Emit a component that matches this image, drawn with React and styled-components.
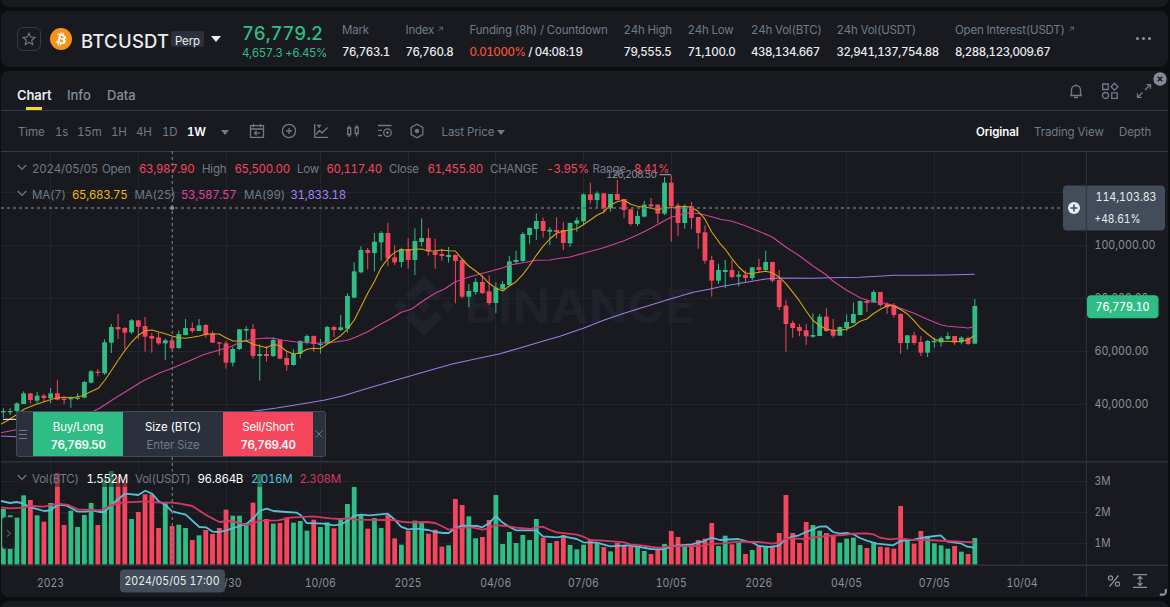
import React from "react";
import styled, { createGlobalStyle, css } from "styled-components";

const c = {
  bg: "#0b0e11", panel: "#181a1f", line: "#333b47", grid: "#22252c", text: "#eaecef",
  muted: "#707a8a", axis: "#8b919b", up: "#2ebd85", down: "#f6465d", yellow: "#fcd535",
  gold: "#d9a30d", pink: "#d6409f", purple: "#9f7aea", cyan: "#56bfd8", rose: "#d63864",
  box: "#2b313c", tag: "#434c5a",
};

const Global = createGlobalStyle`
  * { box-sizing: border-box; }
  body {
    margin: 0; background: ${c.bg}; color: ${c.text}; overflow: hidden;
    font-family: Inter, "Liberation Sans", sans-serif; font-size: 11.5px; font-variant-numeric: tabular-nums;
  }
`;
const Page = styled.div`
  width: 1170px; height: 607px; padding: 0 2px 0 1px; overflow: hidden;
  display: flex; flex-direction: column; gap: 4px;
`;
const Sliver = styled.div`
  flex: none; background: ${c.panel}; height: ${(p) => (p.$top ? 7 : 10)}px;
  border-radius: ${(p) => (p.$top ? "0 0 8px 8px" : "8px 8px 0 0")};
`;
const Panel = styled.section`
  flex: none; background: ${c.panel}; border-radius: 8px; position: relative; overflow: hidden;
`;
const Header = styled(Panel)`
  height: 56px; display: flex; align-items: flex-start; padding: 0 16px;
`;
const StarBox = styled.div`
  width: 24px; height: 24px; margin-top: 16px; border: 1px solid ${c.line}; border-radius: 6px;
  display: flex; align-items: center; justify-content: center;
`;
const Coin = styled.div`margin: 17px 0 0 9px; width: 22px; height: 22px;`;
const Pair = styled.h1`
  margin: 19px 0 0 9px; width: 90px; font-size: 18.5px; line-height: 23px; font-weight: 500; white-space: nowrap;
  letter-spacing: 0.25px;
`;
const Perp = styled.span`
  margin-top: 20px; width: 33px; height: 16px; border-radius: 2px; background: ${c.box};
  font-size: 11.5px; line-height: 20px; text-align: center; letter-spacing: -0.1px;
`;
const Caret = styled.i`
  flex: none; width: 0; height: 0; border: ${(p) => p.$s}px solid transparent; border-bottom: 0;
  border-top: ${(p) => p.$s + 1}px solid ${(p) => p.$c};
`;
const PairCaret = styled(Caret)`margin: 25px 0 0 7px;`;
const Price = styled.div`
  margin-left: 21px; width: 100px; color: ${c.up}; white-space: nowrap;
  strong { display: block; margin-top: 11px; font-size: 18.5px; line-height: 23px; font-weight: 500; letter-spacing: -0.12px; }
  span { display: block; line-height: 17px; letter-spacing: -0.42px; }
`;
const Stat = styled.dl`
  margin: 0; flex: none; width: ${(p) => p.$w}px; white-space: nowrap;
  dt { margin-top: 11px; line-height: 16px; color: ${c.muted}; display: flex; gap: 4px; letter-spacing: -0.2px; }
  dt svg { flex: none; }
  dd { margin: 5px 0 0; line-height: 18px; letter-spacing: ${(p) => (p.$ls === undefined ? -0.4 : p.$ls)}px; font-weight: 500; }
  b { font-weight: 500; color: #f0542f; }
`;
const More = styled.div`
  margin: 26px 0 0 63px; display: flex; gap: 3px; width: 16px;
  i { width: 3px; height: 3px; border-radius: 50%; background: ${c.axis}; }
`;
const ChartPanel = styled(Panel)`height: 526px; display: flex; flex-direction: column;`;
const Tabs = styled.nav`
  flex: none; height: 40px; border-bottom: 1px solid ${c.line}; display: flex; padding: 0 15px 0 16px;
`;
const Tab = styled.span`
  width: ${(p) => p.$w}px; font-size: 13px; line-height: 48px; font-weight: 500; position: relative;
  color: ${(p) => (p.$on ? c.text : "#848e9c")};
  ${(p) => p.$on && css`font-weight: 600; letter-spacing: -0.1px; &::after { content: ""; position: absolute; left: 9px; top: 36px; width: 16px; height: 3px; background: ${c.yellow}; }`}
`;
const TabIcons = styled.div`
  margin-left: auto; display: flex; gap: 16px; padding: 11px 0 0; color: ${c.muted};
  svg { display: block; }
`;
const CloseDot = styled.div`
  position: absolute; right: 1px; top: 1px; width: 14px; height: 14px;
`;
const Toolbar = styled.div`
  flex: none; height: 40px; display: flex; align-items: center; padding: 2px 16px 0 17px; color: ${c.muted};
  svg { flex: none; display: block; }
`;
const Tool = styled.span`
  flex: none; width: ${(p) => p.$w}px; line-height: 17px; white-space: nowrap; letter-spacing: -0.1px;
  font-weight: ${(p) => (p.$on ? 600 : 400)}; color: ${(p) => (p.$on ? "#fff" : c.muted)};
`;
const Icons = styled.div`display: flex; gap: 16px; margin: -2px 16.5px 0 20px;`;
const Modes = styled.div`margin-left: auto; display: flex;`;
const ChartBox = styled.div`
  position: relative; height: 446px; border-top: 1px solid ${c.line};
  > svg { display: block; margin-top: -1px; }
`;
const Legend = styled.div`
  position: absolute; left: 16px; top: ${(p) => p.$top}px; display: flex; line-height: 16px;
  background: ${(p) => (p.$veil ? "rgba(24, 26, 31, 0.5)" : "none")};
  svg { flex: none; width: 10px; height: 12px; margin-right: 5px; }
`;
const Item = styled.span`
  flex: none; width: ${(p) => p.$w}px; white-space: nowrap;
  letter-spacing: ${(p) => (p.$c ? -0.34 : -0.2)}px; color: ${(p) => p.$c || c.muted};
`;
const Order = styled.div`
  position: absolute; left: 15px; top: 259px; width: 310px; height: 46px; display: flex;
  background: ${c.box}; border: 1px solid ${c.tag}; border-radius: 3px;
`;
const Grip = styled.div`
  width: 16px; padding-right: 4px; display: flex; flex-direction: column; gap: 3px; justify-content: center; align-items: center;
  i { width: 8px; height: 1px; background: ${c.muted}; }
`;
const Side = styled.div`
  width: ${(p) => p.$w}px; background: ${(p) => p.$bg || "none"}; color: #fff; text-align: center;
  padding-top: 6px; line-height: 18px; white-space: nowrap; letter-spacing: -0.15px;
  div + div { font-weight: ${(p) => (p.$bg ? 600 : 400)}; color: ${(p) => (p.$bg ? "#fff" : c.muted)}; letter-spacing: ${(p) => (p.$bg ? -0.35 : -0.15)}px; }
`;
const CloseX = styled.div`width: 12px; display: flex; align-items: center; justify-content: center;`;

/* high, body top, body bottom, low (third-pixels below the plot top), volume top; the first letter marks direction */
const candles = `G775,783,786,803,176 G774,783,786,795,196 G757,760,783,787,203 G724,730,762,762,136 R730,730,750,760,150
G726,737,752,760,196 R731,737,744,756,215 G714,730,745,759,159 R690,730,749,751,69 R739,746,750,762,225
G739,744,748,773,182 G730,743,746,750,231 G693,696,743,745,195 G660,664,698,700,159 R657,665,669,679,225
G568,577,670,675,88 G522,531,578,609,63 R492,531,538,567,80 R531,534,548,597,97 G507,511,547,552,207
R511,511,530,568,186 R501,528,560,605,133 R549,558,566,608,133 R548,562,580,585,234 G566,571,580,630,160
R562,571,595,600,228 G541,552,594,597,224 G507,534,555,556,234 R517,534,543,549,270 G507,526,543,543,256
R522,525,555,563,240 R544,550,578,579,252 R576,577,581,616,234 R573,580,638,656,179 G590,597,638,649,197
G537,538,597,600,197 G529,537,542,575,219 R522,537,618,627,158 G583,612,618,692,72 R588,612,618,635,207
G561,570,618,621,221 R570,570,626,626,219 R606,624,645,662,202 G598,611,645,647,218 G571,573,612,625,213
G553,558,577,583,242 R556,558,582,605,209 G567,581,584,611,231 G528,531,581,582,217 R527,531,540,561,235
G495,532,540,543,207 G430,438,536,548,162 G337,364,443,444,111 G289,300,367,370,195 R294,300,309,358,236
G249,275,309,364,204 G243,249,277,332,234 R219,249,325,349,195 R286,322,337,345,265 G293,297,336,352,284
R264,297,330,356,242 G235,273,330,375,212 G205,264,276,290,217 R235,264,304,317,251 R266,304,315,356,239
R296,312,318,332,290 G291,315,321,338,286 R313,315,333,460,147 R326,330,440,444,165 G402,423,440,472,199
G385,396,426,434,265 R376,396,429,432,261 R376,424,459,466,210 G397,413,459,489,135 G393,402,417,423,282
G318,334,405,407,246 G302,330,336,344,279 G246,252,333,336,255 G232,234,255,282,270 G190,213,237,270,207
R202,213,243,263,263 G231,239,245,285,279 R202,240,246,266,273 R216,240,279,300,255 G217,219,280,291,285
G202,211,221,245,298 G130,133,214,226,284 R98,133,150,161,270 G124,130,150,171,279 R130,130,175,190,291
G132,132,175,185,304 R90,132,150,152,279 R147,147,180,204,286 R176,178,222,227,291 G182,198,222,228,292
G153,164,200,202,303 R144,163,169,172,312 R162,164,191,219,300 G81,98,191,195,282 R76,98,168,275,243
R159,166,219,258,261 G163,169,219,236,291 R156,169,204,237,286 R201,201,249,296,270 R226,247,332,341,266
R317,330,392,440,219 G341,360,392,402,288 G330,360,366,414,257 R330,360,381,385,283 G363,374,380,409,278
R361,374,384,398,312 G351,352,384,391,300 R327,351,360,368,288 G302,336,360,363,288 R335,336,392,397,291
R360,390,471,480,249 R450,467,522,605,135 R512,519,534,563,249 R522,531,543,559,279 R522,541,559,585,216
G490,555,560,563,225 G492,500,558,558,242 R475,500,543,546,249 R507,540,557,563,258 G529,531,557,557,278
G493,516,534,543,266 G457,492,519,521,263 G451,453,495,495,285 R449,453,459,486,294 G421,426,457,459,276
R426,426,465,470,290 R457,462,472,492,292 R459,465,495,503,296 R490,492,579,611,168 G555,556,579,598,270
R545,556,579,585,281 R558,576,608,618,243 G570,573,608,621,258 G563,572,577,593,280 G559,564,577,590,286
G547,558,567,570,296 R557,558,577,585,288 G559,563,577,583,305 R560,564,582,585,312 G447,468,581,581,264`
  .split(/\s+/)
  .map((s, i) => {
    const [hi, top, bot, lo, vol] = s.slice(1).split(",").map(Number);
    return { x: 3.4 + 6.746 * i, up: s[0] === "G", hi, top, bot, lo, vol };
  });

/* each line is a list of segments: [x offset, "x,y x,y …"] in third-pixels */
const join = (base, segs) =>
  segs.flatMap(([ox, s]) => s.trim().split(/\s+/).map((p) => {
    const [x, y] = p.split(",").map(Number);
    return `${((x + ox) / 3).toFixed(1)},${(base + y / 3).toFixed(1)}`;
  })).join(" ");

const ma7 = join(150, [
  [0, "2,823 20,813 45,797 72,778 105,764 130,756 160,746 190,742 215,743 245,738 275,724 295,715 315,690 335,660 355,630 375,601 395,576 415,556 436,542 456,540 476,546 496,551 516,558 537,563 557,565 577,562 598,558 618,553 638,552 658,552 679,564 699,573 719,573 739,573"],
  [720, "40,583 60,588 80,593 100,583 120,588 140,604 161,612 181,608 201,598 221,595 241,596 262,582 282,570 302,557 322,538 343,510 363,470 383,430 403,395 424,352 444,325 464,307 484,299 504,301 525,298 545,297 565,303 585,302 605,300 626,302 646,303 666,327 686,348 707,363 727,379"],
  [1440, "27,400 47,414 68,423 88,408 108,395 128,374 148,348 169,316 189,289 209,267 230,250 250,243 270,240 290,236 310,224 331,210 351,196 371,186 391,165 412,155 432,150 452,163 472,169 493,172 513,174 533,179 553,173 573,172 594,172 614,169 634,172 654,184 674,206 695,246 715,273"],
  [2160, "0,281 16,298 36,326 56,351 76,369 96,371 116,367 137,364 157,368 177,381 197,400 217,425 238,452 258,482 278,511 298,526 319,538 339,541 359,541 379,538 400,528 420,514 440,507 460,491 481,478 501,468 510,466 521,469 541,478 561,491 582,512 602,535 622,551 642,567 662,574 683,574 703,575 723,574 743,570 764,556"],
]);
const ma25 = join(150, [
  [0, "3,848 48,839 150,822 230,803 282,783 300,774 340,748 380,723 430,692 480,668 520,653 560,636 610,614 658,600 690,591"],
  [720, "0,577 40,567 80,564 100,565 130,571 170,576 230,580 280,577 322,571 343,563 383,545 424,521 450,508 484,487 515,477 545,455 585,430 615,416 646,395 686,382"],
  [1440, "0,372 70,353 88,345 128,338 169,331 209,330 240,325 270,321 310,310 371,293 432,272 472,255 513,235 553,212 573,202 594,197 614,190 634,189 660,191 700,202"],
  [2160, "0,208 36,214 76,227 116,244 157,261 197,291 238,317 278,347 319,375 339,393 379,420 420,443 440,450 460,455 490,459 521,466 541,475 582,490 622,508 662,524 683,529 723,532 743,534 764,531"],
]);
const ma99 = join(150, [
  [0, "3,858 48,860 400,840 770,782 830,774 890,764 975,750 1030,737"],
  [720, "366,720 440,698 500,681 570,661 640,641"],
  [1440, "0,624 60,611 120,594 180,576 240,559 310,535 371,511 432,490 500,469 573,446 640,427 695,416"],
  [2160, "0,410 70,398 137,387 170,384 280,385 330,383 420,382 500,377 520,376 600,376 680,375 764,373"],
]);
const volFast = join(400, [
  [0, "3,303 30,309 50,306 65,309 92,322 132,333 152,331 172,314 200,317 233,335 260,335 274,330 300,336 314,336 335,314 355,297 375,281 415,285 436,272 456,281 476,304 496,315 516,334 557,344 598,381 618,382 638,395 658,396 679,391 719,378 739,372 760,355 780,332 800,326 820,333 860,336 890,338 903,346 920,369 970,371"],
  [990, "12,376 32,373 52,364 72,348 92,344 120,346 173,341 193,358 213,380 234,388 260,386 295,390 315,396 340,399 356,399 376,384 396,377 440,378 457,382 477,370 497,348 517,367 537,380 558,391 619,391 639,409 680,412 700,409 740,417 760,427 800,428 841,439 890,436 930,441 962,447"],
  [1980, "10,448 40,438 95,433 130,424 154,413 180,420 235,417 260,424 276,427 296,438 330,441 356,437 377,418 397,410 417,406 438,396 458,388 478,380 499,379 519,396 540,401 560,399 580,403 600,414 620,422 650,431 680,434 700,436 721,423 760,419 801,411 842,406 862,425 902,430 922,440 943,443"],
]);
const volSlow = join(400, [
  [0, "3,322 30,325 70,323 92,318 132,320 172,311 205,315 233,328 274,330 300,331 335,315 365,308 436,304 476,308 516,308 540,311 577,318 618,345 658,366 690,363 719,369 739,374 760,370 780,362 800,362 835,361 870,353 940,349"],
  [990, "0,355 32,357 52,355 80,359 160,360 190,360 213,365 234,367 290,366 315,369 335,378 356,389 396,383 430,383 457,389 477,385 497,375 537,379 558,383 600,387 619,382 639,380 660,390 680,397 740,404 760,410 781,420 820,422 882,427 902,433 940,437 980,443"],
  [1980, "0,443 30,439 100,438 130,437 150,432 190,430 235,425 296,426 337,431 356,428 377,417 400,415 438,417 458,413 500,408 550,405 580,401 620,400 640,403 660,413 690,418 721,415 750,419 800,420 860,423 900,425 943,427"],
]);

const ticks = [[50.6, "2023", 27], [138.5], [226, "06/30", 31], [320.3, "10/06", 31], [408, "2025", 27], [495.7, "04/06", 31], [583.4, "07/06", 31], [671.2, "10/05", 31], [758.8, "2026", 27], [846.5, "04/05", 31], [934.3, "07/05", 31], [1022, "10/04", 31]];
const prices = [[245.3, "100,000.00", 61], [298.3, "80,000.00", 54], [351, "60,000.00", 54], [404, "40,000.00", 54]];
const volumes = [[481, "3M"], [512.3, "2M"], [543.3, "1M"]];

const AxisText = styled.text`
  font-family: Inter, "Liberation Sans", sans-serif; font-size: ${(p) => p.$s || 11.5}px; fill: ${(p) => p.$c || c.axis};
  font-weight: ${(p) => (p.$b ? 500 : 400)};
`;
const Watermark = styled.text`font: 700 46px Inter, "Liberation Sans", sans-serif; fill: #1f222a;`;
const Stroke = styled.svg`fill: none; stroke: currentColor; stroke-width: ${(p) => p.$sw || 1.3};`;

const Chevron = () => (
  <Stroke viewBox="0 0 10 12" $sw="1.2"><path d="M.8 4 5 8.3 9.2 4" stroke={c.muted} /></Stroke>
);
const Diag = () => (
  <Stroke width="5" height="14" viewBox="0 0 5 14" $sw=".8"><path d="M.5 9 4.3 5.300M1.200 5.200h3.200v3.200" /></Stroke>
);

function Chart() {
  return (
    <svg width="1167" height="446" viewBox="1 151 1167 446">
      <g fill="#1f222a">
        <path transform="translate(394 276) scale(.474)" d="M38.73 53.2l24.59-24.58 24.6 24.6 14.3-14.31L63.32 0 24.42 38.9zM0 63.31l14.3-14.31 14.31 14.31-14.31 14.3zM38.73 73.41l24.59 24.59 24.6-24.6 14.31 14.29-38.91 38.91-38.9-38.9zM98 63.31l14.3-14.31 14.31 14.3-14.31 14.32zM77.83 63.3L63.32 48.78 48.8 63.3l14.52 14.51z" />
      </g>
      <Watermark x="464.5" y="323" textLength="231" lengthAdjust="spacingAndGlyphs">BINANCE</Watermark>
      <g stroke={c.grid}>
        {ticks.map(([x]) => <path key={x} d={`M${Math.floor(x) + 0.5} 151V565`} />)}
        {[192, 245, 298, 351, 404, 481, 512, 543].map((y) => <path key={y} d={`M1 ${y + 0.5}H1086`} />)}
      </g>
      {candles.map((k, i) => {
        const fill = k.up ? c.up : c.down;
        const y = (v) => 150 + v / 3;
        return (
          <g key={i} fill={fill}>
            <rect x={k.x - 0.5} y={y(k.hi)} width="1" height={(k.lo - k.hi) / 3} />
            <rect x={k.x - 2.4} y={y(k.top)} width="4.8" height={Math.max(1.3, (k.bot - k.top) / 3)} />
            <rect x={k.x - 2.4} y={450 + k.vol / 3} width="4.8" height={564.7 - 450 - k.vol / 3} />
          </g>
        );
      })}
      <g fill="none" strokeLinejoin="round">
        <polyline points={ma99} stroke={c.purple} strokeWidth="1.1" />
        <polyline points={ma25} stroke={c.pink} strokeWidth="1.1" />
        <polyline points={ma7} stroke={c.gold} strokeWidth="1.1" />
        <polyline points={volFast} stroke={c.cyan} strokeWidth="1.8" />
        <polyline points={volSlow} stroke={c.rose} strokeWidth="1.8" />
      </g>
      <path d="M3 419.3H17" stroke="#fff" />
      <AxisText x="606" y="178" textLength="51" $s="10">126,208.50</AxisText>
      <path d="M659.500 174.700H671" stroke={c.axis} strokeWidth="1.2" />
      <g stroke="#6a6c72" strokeWidth="1.4" strokeDasharray="3 3">
        <path d="M1 208H1063M172.3 151V565" />
      </g>
      <circle cx="172.2" cy="208" r="2" fill={c.axis} />
      <g fill="none">
        <path d="M1 461.8H1168M1 565.2H1168" strokeWidth="1.4" stroke="#2c323c" />
        <path d="M1086.4 151V597" stroke="#2c323c" />
      </g>
      {ticks.filter((t) => t[1]).map(([x, s, w]) => (
        <AxisText key={x} x={x - w / 2} y="587" textLength={w} lengthAdjust="spacingAndGlyphs">{s}</AxisText>
      ))}
      {prices.map(([y, s, w]) => <AxisText key={s} x="1094.5" y={y + 4} textLength={w} lengthAdjust="spacingAndGlyphs">{s}</AxisText>)}
      {volumes.map(([y, s]) => <AxisText key={s} x="1094.5" y={y + 4} textLength="16" lengthAdjust="spacingAndGlyphs">{s}</AxisText>)}
      <rect x="1087" y="295.3" width="71.5" height="23" rx="4" fill={c.up} />
      <AxisText x="1095.5" y="311.3" $c="#fff" $b textLength="54" lengthAdjust="spacingAndGlyphs">76,779.10</AxisText>
      <rect x="1063" y="185.5" width="102" height="45" rx="4" fill={c.tag} />
      <path d="M1086.4 186V230" stroke="#2f3641" />
      <circle cx="1074" cy="208" r="6" fill={c.text} />
      <path d="M1070.5 208h7M1074 204.5v7" stroke={c.tag} strokeWidth="1.6" />
      <AxisText x="1095.5" y="201.3" $c={c.text} textLength="61" lengthAdjust="spacingAndGlyphs">114,103.83</AxisText>
      <AxisText x="1094.5" y="223.3" $c={c.text} textLength="46" lengthAdjust="spacingAndGlyphs">+48.61%</AxisText>
      <rect x="120" y="569.5" width="105" height="23" rx="4" fill={c.tag} />
      <AxisText x="124.5" y="585.3" $c={c.text} textLength="95" lengthAdjust="spacingAndGlyphs">2024/05/05 17:00</AxisText>
      <rect x="2.5" y="517.5" width="12" height="31" rx="2.5" fill={c.panel} stroke="#2c323c" />
      <path d="M7 530l3.5 3.3L7 536.500" fill="none" stroke={c.muted} />
      <g fill="none" stroke={c.axis} strokeWidth="1.2">
        <circle cx="1110.5" cy="578" r="2.1" /><circle cx="1117.5" cy="584" r="2.1" /><path d="M1118.5 575.5l-9 11" />
        <path d="M1133 574.6h14M1133 587.4h14M1140 577v8M1137.600 579l2.400-2.400 2.400 2.400M1137.600 583l2.400 2.400 2.400-2.400" />
      </g>
      <path d="M1165.800 589v5.700h-6" fill="none" stroke={c.axis} strokeWidth="2.200" />
    </svg>
  );
}

const rows = [
  { top: 9, items: [["2024/05/05", 70], ["Open", 37], ["63,987.90", 63, c.down], ["High", 32.5], ["65,500.00", 62.5, c.down], ["Low", 29.5], ["60,117.40", 62.5, c.down], ["Close", 38.5], ["61,455.80", 62.5, c.down], ["CHANGE", 56.5], ["-3.95%", 46, c.down], ["Range", 41.5], ["8.41%", 40, c.down]] },
  { top: 35, items: [["MA(7)", 40], ["65,683.75", 62.5, "#f0b90b"], ["MA(25)", 46.5], ["53,587.57", 63, "#e13fa8"], ["MA(99)", 46.5], ["31,833.18", 60, "#a682f8"]] },
  { top: 319, veil: true, items: [["Vol(BTC)", 54.5], ["1.552M", 48.5, "#fff"], ["Vol(USDT)", 62.5], ["96.864B", 53.5, "#fff"], ["2.016M", 48.5, c.cyan], ["2.308M", 42, c.rose]] },
];

export default function App() {
  return (
    <Page>
      <Global />
      <Sliver $top />
      <Header>
        <StarBox><Stroke width="14" height="14" viewBox="0 0 14 14" $sw="1.1"><path stroke={c.muted} d="M7 1.200l1.700 3.900 4.200.4-3.200 2.800 1 4.200L7 10.300l-3.700 2.200 1-4.200L1.100 5.500l4.200-.4z" /></Stroke></StarBox>
        <Coin>
          <svg width="22" height="22" viewBox="0 0 32 32">
            <circle cx="16" cy="16" r="16" fill="#f7931a" />
            <path fill="#fff" fillRule="evenodd" d="M23.189 14.020c.314-2.096-1.283-3.223-3.465-3.975l.708-2.840-1.728-.430-.690 2.765c-.454-.114-.920-.220-1.385-.326l.695-2.783L15.596 6l-.708 2.839c-.376-.086-.746-.170-1.104-.260l.002-.009-2.384-.595-.460 1.846s1.283.294 1.256.312c.700.175.826.638.805 1.006l-.806 3.235c.048.012.110.030.180.057l-.183-.045-1.130 4.532c-.086.212-.303.531-.793.410.018.025-1.256-.313-1.256-.313l-.858 1.978 2.250.561c.418.105.828.215 1.231.318l-.715 2.872 1.727.430.708-2.840c.472.127.930.245 1.378.357l-.706 2.828 1.728.430.715-2.866c2.948.558 5.164.333 6.097-2.333.752-2.146-.037-3.385-1.588-4.192 1.130-.260 1.980-1.003 2.207-2.538zm-3.950 5.538c-.533 2.147-4.148.986-5.320.695l.950-3.805c1.172.293 4.929.872 4.370 3.110zm.535-5.569c-.487 1.953-3.495.960-4.470.717l.860-3.450c.975.243 4.118.696 3.610 2.733z" />
          </svg>
        </Coin>
        <Pair>BTCUSDT</Pair>
        <Perp>Perp</Perp>
        <PairCaret $s={5} $c={c.text} />
        <Price><strong>76,779.2</strong><span>4,657.3 +6.45%</span></Price>
        <Stat $w={63.5}><dt>Mark</dt><dd>76,763.1</dd></Stat>
        <Stat $w={64}><dt>Index<Diag /></dt><dd>76,760.8</dd></Stat>
        <Stat $w={154}><dt>Funding (8h) / Countdown</dt><dd><b>0.01000%</b> / 04:08:19</dd></Stat>
        <Stat $w={64}><dt>24h High</dt><dd>79,555.5</dd></Stat>
        <Stat $w={63.5}><dt>24h Low</dt><dd>71,100.0</dd></Stat>
        <Stat $w={85.5}><dt>24h Vol(BTC)</dt><dd>438,134.667</dd></Stat>
        <Stat $w={118.5}><dt>24h Vol(USDT)</dt><dd>32,941,137,754.88</dd></Stat>
        <Stat $w={118}><dt>Open Interest(USDT)<Diag /></dt><dd>8,288,123,009.67</dd></Stat>
        <More><i /><i /><i /></More>
      </Header>
      <ChartPanel>
        <Tabs>
          <Tab $on $w={50}>Chart</Tab><Tab $w={40}>Info</Tab><Tab $w={40}>Data</Tab>
          <TabIcons>
            <Stroke width="18" height="18" viewBox="0 0 18 18"><path d="M3 13.500h12M4.500 13.500V8a4.500 4.500 0 0 1 9 0v5.500M7 15.500h4M9 3.500V2.500" /></Stroke>
            <Stroke width="18" height="18" viewBox="0 0 18 18"><path d="M1.700 2h5.500v5.500H1.700zM10.700 10.800h5.500v5.500h-5.500zM13.500 1.200l3.500 3.500-3.500 3.500L10 4.700z" /><circle cx="4.500" cy="13.500" r="3" /></Stroke>
            <Stroke width="18" height="18" viewBox="0 0 18 18"><path d="M10 8l5-5M11.500 2.700h4v4M7.500 10.500l-4.700 4.700M2.500 11.300v4h4" /></Stroke>
          </TabIcons>
        </Tabs>
        <CloseDot><svg width="14" height="14" viewBox="0 0 14 14"><circle cx="7" cy="7" r="6.700" fill="#848b98" /><path d="M4.800 4.800l4.400 4.400M9.200 4.800L4.800 9.200" stroke={c.panel} strokeWidth="1.500" /></svg></CloseDot>
        <Toolbar>
          <Tool $w={37}>Time</Tool><Tool $w={22}>1s</Tool><Tool $w={34}>15m</Tool><Tool $w={25}>1H</Tool>
          <Tool $w={26}>4H</Tool><Tool $w={25}>1D</Tool><Tool $on $w={34}>1W</Tool><Caret $s={4} $c={c.muted} />
          <Icons>
            <Stroke width="16" height="16" viewBox="0 0 16 16"><path d="M1.500 2.700h13v11.600h-13zM1.500 6h13M4.500 .8v3.500M11.500 .8v3.500M11 10.200H5.500M7.700 8l-2.200 2.200 2.200 2.200" /></Stroke>
            <Stroke width="16" height="16" viewBox="0 0 16 16"><circle cx="8" cy="8" r="6.600" /><path d="M8 5v6M5 8h6" /></Stroke>
            <Stroke width="16" height="16" viewBox="0 0 16 16"><path d="M1.700 1v13.300H15M3 11.500l3.500-4 2.500 2.500L14.500 4.500M4 2.500h4M6 2.500v2.500" /></Stroke>
            <Stroke width="16" height="16" viewBox="0 0 16 16"><path d="M2.700 5h3v6.500h-3zM4.200 2.500V5M4.200 11.500v2.500M10.200 4.500h3v6h-3zM11.700 2v2.500M11.700 10.500v3" /></Stroke>
            <Stroke width="16" height="16" viewBox="0 0 16 16"><path d="M1 2.500h13.500M1 7.300h4M1 12.500h4" /><circle cx="10.500" cy="9.700" r="3.800" /><circle cx="10.500" cy="9.700" r=".7" /></Stroke>
            <Stroke width="16" height="16" viewBox="0 0 16 16"><path d="M8 1.200l5.800 3.300v7L8 14.800l-5.800-3.300v-7z" /><circle cx="8" cy="8" r="1.500" fill="currentColor" /></Stroke>
          </Icons>
          <Tool $w={55.5}>Last Price</Tool><Caret $s={4} $c={c.muted} />
          <Modes><Tool $on $w={58}>Original</Tool><Tool $w={85}>Trading View</Tool><Tool $w={33}>Depth</Tool></Modes>
        </Toolbar>
        <ChartBox>
          <Chart />
          {rows.map((r) => (
            <Legend key={r.top} $top={r.top} $veil={r.veil}>
              <Chevron />
              {r.items.map(([s, w, col]) => <Item key={s} $w={w} $c={col}>{s}</Item>)}
            </Legend>
          ))}
          <Order>
            <Grip><i /><i /><i /></Grip>
            <Side $w={90} $bg={c.up}><div>Buy/Long</div><div>76,769.50</div></Side>
            <Side $w={100}><div>Size (BTC)</div><div>Enter Size</div></Side>
            <Side $w={90} $bg={c.down}><div>Sell/Short</div><div>76,769.40</div></Side>
            <CloseX><Stroke width="8" height="8" viewBox="0 0 8 8" $sw="1"><path stroke={c.muted} d="M.5.500l7 7M7.500.500l-7 7" /></Stroke></CloseX>
          </Order>
        </ChartBox>
      </ChartPanel>
      <Sliver />
    </Page>
  );
}
